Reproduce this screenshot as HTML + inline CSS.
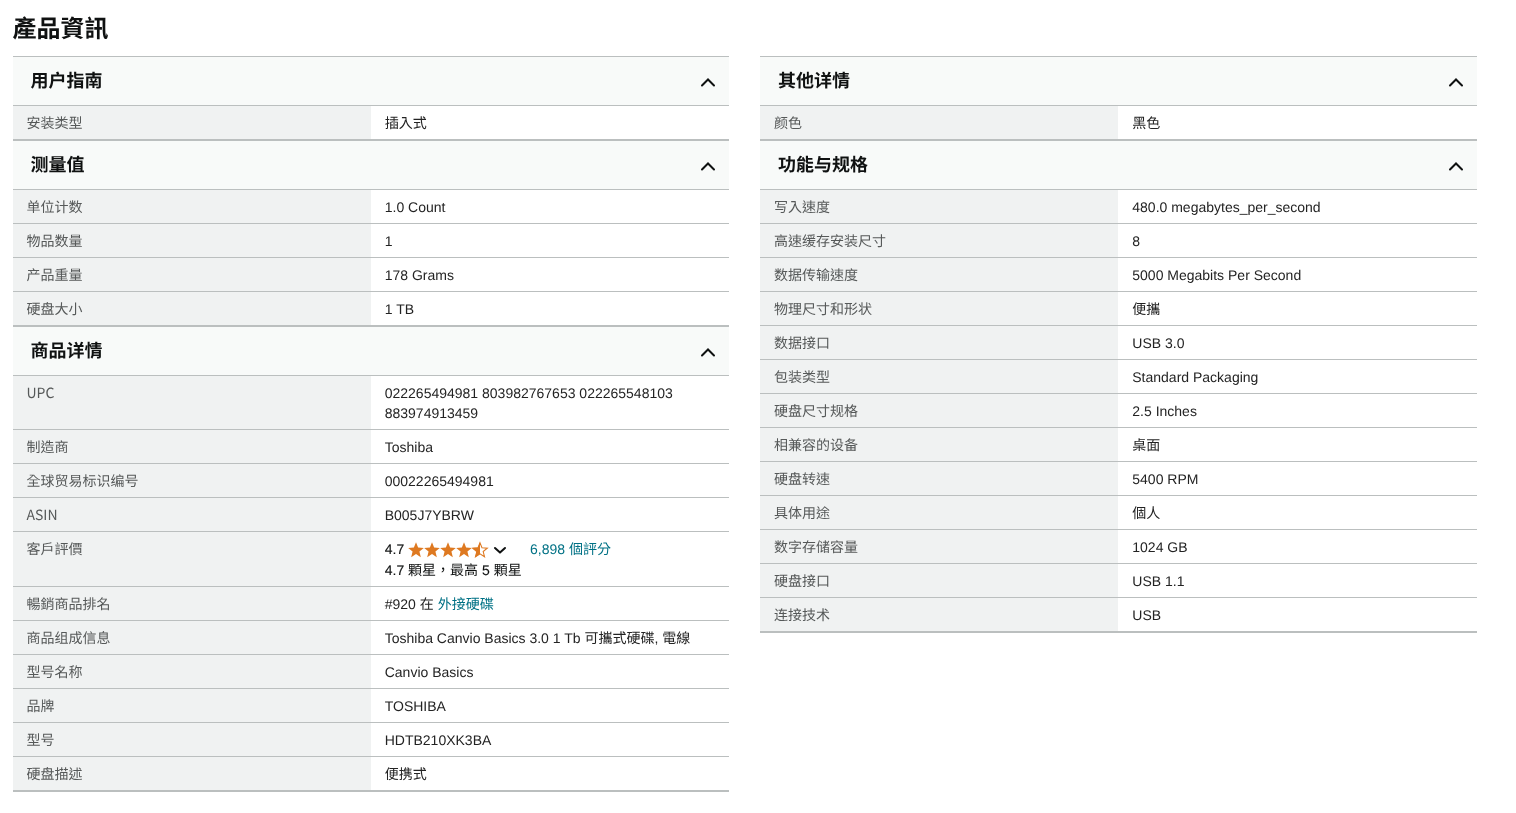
<!DOCTYPE html>
<html lang="en">
<head>
<meta charset="utf-8">
<title>產品資訊</title>
<style>
*{box-sizing:border-box}
html,body{margin:0;padding:0;background:#fff}
body{text-rendering:geometricPrecision;width:1516px;height:813px;overflow:hidden;position:relative;
 font-family:"Liberation Sans","Noto Sans CJK TC",sans-serif;font-size:14px;line-height:20px;color:#0f1111}
#wrap{position:absolute;left:0;top:0;width:1516px;height:813px;will-change:transform}
h2{position:absolute;left:12.5px;top:14px;margin:0;font-size:24px;line-height:32px;font-weight:700;color:#0f1111}
.col{position:absolute;top:56px;width:716.43px;border-bottom:1px solid #bbbfbf}
#c1{left:12.5px}
#c2{left:760.08px}
.sec{border-top:1px solid #bbbfbf}
.hd{height:48px;background:#f8faf9;position:relative;padding:12px 18px 0 18px;font-size:18px;line-height:24px;font-weight:700;color:#0f1111}
.hd svg{position:absolute;right:13px;top:20px}
table{width:100%;border-collapse:collapse;border-spacing:0;table-layout:fixed}
th,td{border-top:1px solid #bbbfbf;border-bottom:1px solid #bbbfbf;padding:7px 14px 6px;text-align:left;vertical-align:top;font-weight:400;font-size:14px;line-height:20px}
th{width:50%;background:#f0f2f2;color:#565959}
td{color:#232323;background:#fff}
td.rt{color:#0f1111}
.k{-webkit-text-stroke:0.12px #0f1111}
.nl{font-family:"Noto Sans CJK TC","Liberation Sans",sans-serif;line-height:16px}
a{color:#007185;text-decoration:none}
.r1{height:21px;white-space:nowrap}
.sp{display:inline-block;width:125.8px;height:1px}
#stars{position:absolute;left:404px;top:537px}
</style>
</head>
<body>
<div id="wrap">
<h2>產品資訊</h2>

<div class="col" id="c1">
 <div class="sec">
  <div class="hd">用户指南<svg width="16" height="10" viewBox="0 0 16 10"><path d="M2 8.5 L8 2.5 L14 8.5" fill="none" stroke="#0f1111" stroke-width="2" stroke-linecap="round"/></svg></div>
  <table>
   <tr><th>安装类型</th><td>插入式</td></tr>
  </table>
 </div>
 <div class="sec">
  <div class="hd">测量值<svg width="16" height="10" viewBox="0 0 16 10"><path d="M2 8.5 L8 2.5 L14 8.5" fill="none" stroke="#0f1111" stroke-width="2" stroke-linecap="round"/></svg></div>
  <table>
   <tr><th>单位计数</th><td>1.0 Count</td></tr>
   <tr><th>物品数量</th><td>1</td></tr>
   <tr><th>产品重量</th><td>178 Grams</td></tr>
   <tr><th>硬盘大小</th><td>1 TB</td></tr>
  </table>
 </div>
 <div class="sec">
  <div class="hd">商品详情<svg width="16" height="10" viewBox="0 0 16 10"><path d="M2 8.5 L8 2.5 L14 8.5" fill="none" stroke="#0f1111" stroke-width="2" stroke-linecap="round"/></svg></div>
  <table>
   <tr><th><span class="nl">UPC</span></th><td>022265494981 803982767653 022265548103 883974913459</td></tr>
   <tr><th>制造商</th><td>Toshiba</td></tr>
   <tr><th>全球贸易标识编号</th><td>00022265494981</td></tr>
   <tr><th><span class="nl">ASIN</span></th><td>B005J7YBRW</td></tr>
   <tr><th>客戶評價</th><td class="rt"><div class="r1"><span class="k">4.7</span><span class="sp"></span><a>6,898 個評分</a></div><div><span class="k">4.7</span> 顆星，最高 <span class="k">5</span> 顆星</div></td></tr>
   <tr><th>暢銷商品排名</th><td>#920 在 <a>外接硬碟</a></td></tr>
   <tr><th>商品组成信息</th><td>Toshiba Canvio Basics 3.0 1 Tb 可攜式硬碟, 電線</td></tr>
   <tr><th>型号名称</th><td>Canvio Basics</td></tr>
   <tr><th>品牌</th><td>TOSHIBA</td></tr>
   <tr><th>型号</th><td>HDTB210XK3BA</td></tr>
   <tr><th>硬盘描述</th><td>便携式</td></tr>
  </table>
 </div>
</div>

<div class="col" id="c2">
 <div class="sec">
  <div class="hd">其他详情<svg width="16" height="10" viewBox="0 0 16 10"><path d="M2 8.5 L8 2.5 L14 8.5" fill="none" stroke="#0f1111" stroke-width="2" stroke-linecap="round"/></svg></div>
  <table>
   <tr><th>颜色</th><td>黑色</td></tr>
  </table>
 </div>
 <div class="sec">
  <div class="hd">功能与规格<svg width="16" height="10" viewBox="0 0 16 10"><path d="M2 8.5 L8 2.5 L14 8.5" fill="none" stroke="#0f1111" stroke-width="2" stroke-linecap="round"/></svg></div>
  <table>
   <tr><th>写入速度</th><td>480.0 megabytes_per_second</td></tr>
   <tr><th>高速缓存安装尺寸</th><td>8</td></tr>
   <tr><th>数据传输速度</th><td>5000 Megabits Per Second</td></tr>
   <tr><th>物理尺寸和形状</th><td>便攜</td></tr>
   <tr><th>数据接口</th><td>USB 3.0</td></tr>
   <tr><th>包装类型</th><td>Standard Packaging</td></tr>
   <tr><th>硬盘尺寸规格</th><td>2.5 Inches</td></tr>
   <tr><th>相兼容的设备</th><td>桌面</td></tr>
   <tr><th>硬盘转速</th><td>5400 RPM</td></tr>
   <tr><th>具体用途</th><td>個人</td></tr>
   <tr><th>数字存储容量</th><td>1024 GB</td></tr>
   <tr><th>硬盘接口</th><td>USB 1.1</td></tr>
   <tr><th>连接技术</th><td>USB</td></tr>
  </table>
 </div>
</div>
<svg id="stars" width="112" height="26" viewBox="404 537 112 26">
<path d="M416.00 542.30 L418.12 547.59 L423.80 547.97 L419.42 551.61 L420.82 557.13 L416.00 554.10 L411.18 557.13 L412.58 551.61 L408.20 547.97 L413.88 547.59Z" fill="#de7921"/>
<path d="M432.00 542.30 L434.12 547.59 L439.80 547.97 L435.42 551.61 L436.82 557.13 L432.00 554.10 L427.18 557.13 L428.58 551.61 L424.20 547.97 L429.88 547.59Z" fill="#de7921"/>
<path d="M448.00 542.30 L450.12 547.59 L455.80 547.97 L451.42 551.61 L452.82 557.13 L448.00 554.10 L443.18 557.13 L444.58 551.61 L440.20 547.97 L445.88 547.59Z" fill="#de7921"/>
<path d="M464.00 542.30 L466.12 547.59 L471.80 547.97 L467.42 551.61 L468.82 557.13 L464.00 554.10 L459.18 557.13 L460.58 551.61 L456.20 547.97 L461.88 547.59Z" fill="#de7921"/>
<path d="M480.00 542.85 L481.97 547.79 L487.28 548.14 L483.19 551.54 L484.50 556.69 L480.00 553.85 L475.50 556.69 L476.81 551.54 L472.72 548.14 L478.03 547.79Z" fill="#fff" stroke="#de7921" stroke-width="1.1" stroke-linejoin="miter"/>
<path d="M480.00 542.30 L480.00 554.10 L475.18 557.13 L476.58 551.61 L472.20 547.97 L477.88 547.59Z" fill="#de7921"/>
<path d="M495 548 L500 552.6 L505 548" fill="none" stroke="#0f1111" stroke-width="2" stroke-linecap="round" stroke-linejoin="round"/>
</svg>
</div>
</body>
</html>
